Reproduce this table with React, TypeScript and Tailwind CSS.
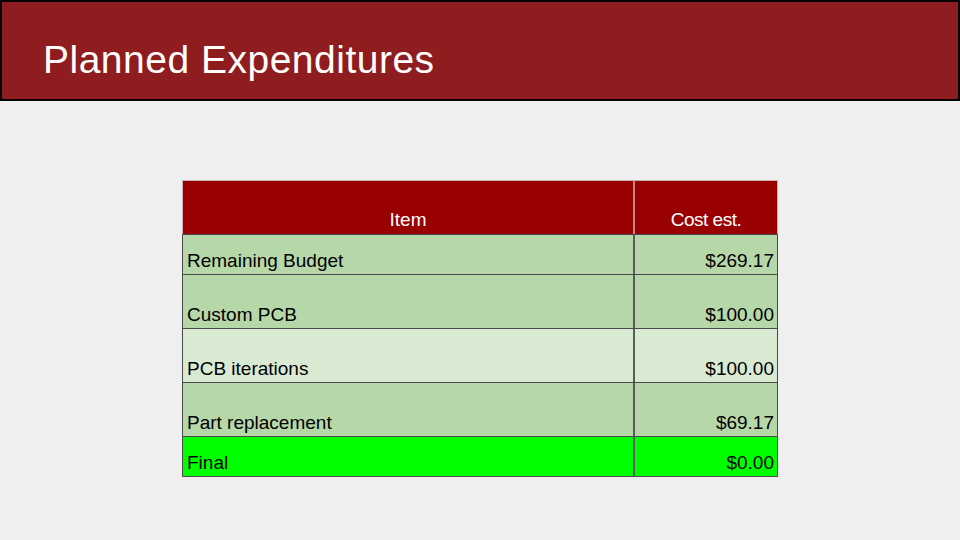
import React from "react";

type Row = { item: string; cost: string; bg: string; h: string };

const rows: Row[] = [
  { item: "Remaining Budget", cost: "$269.17", bg: "bg-[#b6d7a8]", h: "h-[40px]" },
  { item: "Custom PCB", cost: "$100.00", bg: "bg-[#b6d7a8]", h: "h-[54px]" },
  { item: "PCB iterations", cost: "$100.00", bg: "bg-[#d9ead3]", h: "h-[54px]" },
  { item: "Part replacement", cost: "$69.17", bg: "bg-[#b6d7a8]", h: "h-[54px]" },
  { item: "Final", cost: "$0.00", bg: "bg-[#00ff00]", h: "h-[40px]" },
];

export default function App() {
  return (
    <div className="w-[960px] h-[540px] bg-[#efefef] overflow-hidden font-['Liberation_Sans',Arial,sans-serif]">
      {/* Title bar */}
      <div className="h-[101px] border-2 border-black bg-[#8f1c1e] pl-[41px] pt-[38px]">
        <h1 className="text-white text-[39px] leading-none tracking-[0.5px]">Planned Expenditures</h1>
      </div>

      {/* Cost table */}
      <div className="mt-[79px] ml-[182px] w-[596px] text-[19px] leading-[21px]">
        <div className="flex h-[54px] bg-[#990000] text-white border-t border-l border-r border-[#c9b0b0]">
          <div className="w-[450px] flex items-end justify-center pb-[4px]">Item</div>
          <div className="flex-1 flex items-end justify-center pb-[4px] border-l-2 border-[#bf8a8a] tracking-[-0.5px]">
            Cost est.
          </div>
        </div>
        <div className="border-t border-[#4a4a4a]">
          {rows.map((r) => (
            <div
              key={r.item}
              className={`flex ${r.h} ${r.bg} border-b border-l border-r border-[#4a4a4a] text-black`}
            >
              <div className="w-[450px] flex items-end pl-[4px] pb-[3px]">{r.item}</div>
              <div className="flex-1 flex items-end justify-end pr-[3px] pb-[3px] border-l-2 border-[#5a5a5a]">
                {r.cost}
              </div>
            </div>
          ))}
        </div>
      </div>
    </div>
  );
}
